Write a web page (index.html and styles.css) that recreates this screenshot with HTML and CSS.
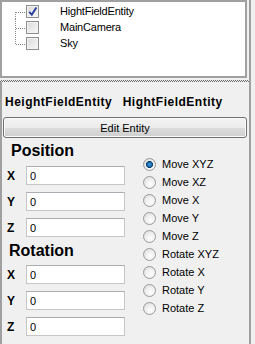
FILE: index.html
```html
<!DOCTYPE html>
<html>
<head>
<meta charset="utf-8">
<link rel="stylesheet" href="styles.css">
</head>
<body>
<div class="window">
  <div class="tree">
    <div class="node">
      <svg class="branch" width="24" height="16" viewBox="0 0 24 16"><path d="M13.5 9v7M14 9.5h10" stroke="#8a8a8a" stroke-width="1" stroke-dasharray="1 1" fill="none" shape-rendering="crispEdges"/></svg>
      <span class="cb"><svg width="11" height="11" viewBox="0 0 11 11"><path d="M2.2 5.8l2.6 2.8 4.6-7.2" stroke="#2c3f9e" stroke-width="1.9" fill="none"/></svg></span>
      <span class="node-label">HightFieldEntity</span>
    </div>
    <div class="node">
      <svg class="branch" width="24" height="16" viewBox="0 0 24 16"><path d="M13.5 0v16M14 9.5h10" stroke="#8a8a8a" stroke-width="1" stroke-dasharray="1 1" fill="none" shape-rendering="crispEdges"/></svg>
      <span class="cb"></span>
      <span class="node-label">MainCamera</span>
    </div>
    <div class="node">
      <svg class="branch" width="24" height="16" viewBox="0 0 24 16"><path d="M13.5 0v10M14 9.5h10" stroke="#8a8a8a" stroke-width="1" stroke-dasharray="1 1" fill="none" shape-rendering="crispEdges"/></svg>
      <span class="cb"></span>
      <span class="node-label">Sky</span>
    </div>
  </div>
  <div class="splitter"></div>
  <div class="panel">
    <div class="entity-line"><span class="entity-type">HeightFieldEntity</span><span class="entity-name">HightFieldEntity</span></div>
    <button class="btn">Edit Entity</button>
    <div class="editor">
      <div class="fields">
        <div class="title title-pos">Position</div>
        <div class="group">
          <div class="row"><span class="axis">X</span><input class="num" value="0"></div>
          <div class="row"><span class="axis">Y</span><input class="num" value="0"></div>
          <div class="row"><span class="axis">Z</span><input class="num" value="0"></div>
        </div>
        <div class="title title-rot">Rotation</div>
        <div class="group">
          <div class="row"><span class="axis">X</span><input class="num" value="0"></div>
          <div class="row"><span class="axis">Y</span><input class="num" value="0"></div>
          <div class="row"><span class="axis">Z</span><input class="num" value="0"></div>
        </div>
      </div>
      <div class="modes">
        <div class="mode"><span class="dot on"></span>Move XYZ</div>
        <div class="mode"><span class="dot"></span>Move XZ</div>
        <div class="mode"><span class="dot"></span>Move X</div>
        <div class="mode"><span class="dot"></span>Move Y</div>
        <div class="mode"><span class="dot"></span>Move Z</div>
        <div class="mode"><span class="dot"></span>Rotate XYZ</div>
        <div class="mode"><span class="dot"></span>Rotate X</div>
        <div class="mode"><span class="dot"></span>Rotate Y</div>
        <div class="mode"><span class="dot"></span>Rotate Z</div>
      </div>
    </div>
  </div>
</div>
</body>
</html>
```

FILE: styles.css
```css
* { box-sizing: border-box; }
html, body { margin: 0; padding: 0; }
body {
  width: 255px;
  height: 344px;
  overflow: hidden;
  background: #f0f0f0;
  font-family: "Liberation Sans", Arial, sans-serif;
  font-size: 11px;
  color: #000;
}
.window {
  width: 251px;
  height: 344px;
  border-right: 2px solid #a0a0a0;
  display: flex;
  flex-direction: column;
}
.tree {
  flex: none;
  width: 247px;
  height: 78px;
  background: #fff;
  border: 2px solid #a0a0a0;
  padding-top: 1px;
}
.node {
  display: flex;
  align-items: center;
  height: 16px;
}
.branch { flex: none; display: block; }
.cb {
  flex: none;
  width: 13px;
  height: 13px;
  border: 1px solid #8e8f8f;
  background: linear-gradient(135deg, #d9d9d9, #f8f8f8);
  box-shadow: inset 0 0 0 1px #f3f3f3;
  display: flex;
  align-items: center;
  justify-content: center;
}
.cb svg { display: block; }
.node-label {
  margin-left: 21px;
  letter-spacing: -0.2px;
  line-height: 13px;
}
.splitter {
  flex: none;
  width: 249px;
  height: 2px;
  margin-top: 2px;
  background: repeating-conic-gradient(#6a6a6a 0 25%, #f0f0f0 0 50%) 0 0 / 2px 2px;
}
.panel {
  flex: 1;
  border-left: 2px solid #a0a0a0;
  padding-top: 14px;
}
.entity-line {
  display: flex;
  padding-left: 3px;
  font-weight: bold;
  font-size: 12px;
  line-height: 13px;
  letter-spacing: 0.5px;
}
.entity-name { margin-left: 10.5px; }
.btn {
  display: block;
  width: 244px;
  height: 21px;
  margin: 8px 0 0 1px;
  padding: 0;
  border: 1px solid #707070;
  border-radius: 3px;
  background: linear-gradient(#f3f3f3, #ebebeb 50%, #dddddd 50%, #cfcfcf);
  box-shadow: inset 0 0 0 1px #fbfbfb;
  font-family: "Liberation Sans", Arial, sans-serif;
  font-size: 11px;
  color: #000;
}
.editor { display: flex; }
.fields {
  width: 141px;
  padding-left: 5px;
  display: flex;
  flex-direction: column;
}
.title {
  font-weight: bold;
  font-size: 16px;
  line-height: 18px;
}
.title-pos { margin: 4px 0 6px 4px; }
.title-rot { margin: 5px 0 5px 2px; }
.group {
  display: flex;
  flex-direction: column;
  gap: 7px;
}
.row {
  display: flex;
  align-items: center;
  height: 19px;
}
.axis {
  width: 19px;
  font-weight: bold;
  font-size: 12px;
}
.num {
  width: 99px;
  height: 19px;
  margin: 0;
  padding: 0 0 0 3px;
  border: 1px solid #c6c6c6;
  border-top-color: #abadb3;
  background: #fff;
  font-family: "Liberation Sans", Arial, sans-serif;
  font-size: 11px;
  color: #000;
  outline: none;
}
.modes {
  padding-top: 17px;
  display: flex;
  flex-direction: column;
}
.mode {
  display: flex;
  align-items: center;
  height: 18px;
}
.dot {
  flex: none;
  width: 13px;
  height: 13px;
  margin-right: 6px;
  border-radius: 50%;
  border: 1px solid #9a9a9a;
  background: radial-gradient(circle at 60% 65%, #ffffff 0, #ececec 55%, #d4d4d4 100%);
}
.dot.on {
  background:
    radial-gradient(circle at 50% 50%, #3fa3e0 0, #1d6fb0 2px, #0c3f70 3.2px, transparent 3.8px),
    radial-gradient(circle at 60% 65%, #ffffff 0, #ececec 55%, #d4d4d4 100%);
}
```
